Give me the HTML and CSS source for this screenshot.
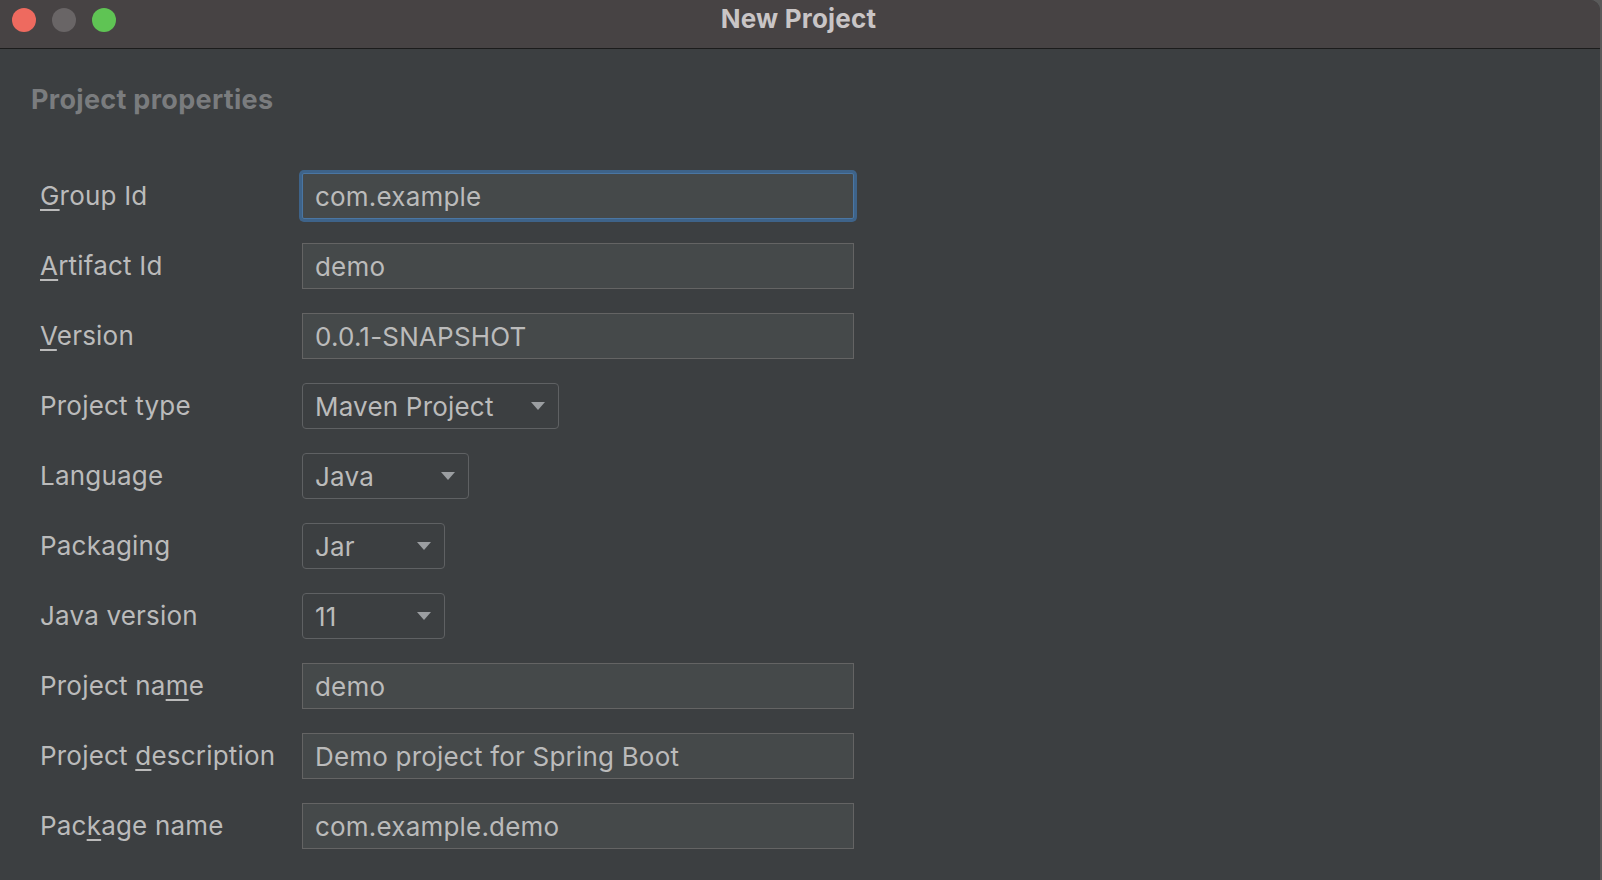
FILE: index.html
```html
<!DOCTYPE html>
<html lang="en">
<head>
<meta charset="utf-8">
<title>New Project</title>
<link rel="stylesheet" href="styles.css">
</head>
<body>
<div class="window">
  <header class="titlebar">
    <div class="lights">
      <span class="light red"></span>
      <span class="light gray"></span>
      <span class="light green"></span>
    </div>
    <div class="title">New Project</div>
    <div class="spacer"></div>
  </header>
  <main class="content">
    <h1 class="heading">Project properties</h1>
    <div class="form">
      <label class="label"><span class="mn">G</span>roup Id</label>
      <div class="field focused">com.example</div>

      <label class="label"><span class="mn">A</span>rtifact Id</label>
      <div class="field">demo</div>

      <label class="label"><span class="mn">V</span>ersion</label>
      <div class="field">0.0.1-SNAPSHOT</div>

      <label class="label">Project type</label>
      <div class="select w-maven"><span>Maven Project</span><svg class="arrow" width="14" height="8" viewBox="0 0 14 8"><polygon points="0,0 14,0 7,8"/></svg></div>

      <label class="label">Language</label>
      <div class="select w-java"><span>Java</span><svg class="arrow" width="14" height="8" viewBox="0 0 14 8"><polygon points="0,0 14,0 7,8"/></svg></div>

      <label class="label">Packaging</label>
      <div class="select w-jar"><span>Jar</span><svg class="arrow" width="14" height="8" viewBox="0 0 14 8"><polygon points="0,0 14,0 7,8"/></svg></div>

      <label class="label">Java version</label>
      <div class="select w-jar"><span>11</span><svg class="arrow" width="14" height="8" viewBox="0 0 14 8"><polygon points="0,0 14,0 7,8"/></svg></div>

      <label class="label">Project na<span class="mn">m</span>e</label>
      <div class="field">demo</div>

      <label class="label">Project <span class="mn">d</span>escription</label>
      <div class="field">Demo project for Spring Boot</div>

      <label class="label">Pac<span class="mn">k</span>age name</label>
      <div class="field">com.example.demo</div>
    </div>
  </main>
</div>
</body>
</html>
```

FILE: styles.css
```css
* { box-sizing: border-box; }

html, body {
  margin: 0;
  padding: 0;
  height: 100%;
}

body {
  background: #5a5a5a;
  font-family: Inter, "Noto Sans", "Liberation Sans", sans-serif;
  color: #bbbbbb;
  overflow: hidden;
}

.window {
  width: 1600px;
  height: 880px;
  background: #3c3f41;
  border-top-right-radius: 10px;
  display: flex;
  flex-direction: column;
}

.titlebar {
  height: 49px;
  flex: 0 0 49px;
  background: #474344;
  border-bottom: 1px solid #1c1c1c;
  border-top-right-radius: 10px;
  display: grid;
  grid-template-columns: 1fr auto 1fr;
  align-items: start;
  padding-top: 7px;
}

.lights {
  display: flex;
  gap: 16px;
  padding-left: 12px;
  padding-top: 1px;
}

.light {
  width: 24px;
  height: 24px;
  border-radius: 50%;
  display: block;
}
.light.red { background: #ee6a5f; }
.light.gray { background: #696566; }
.light.green { background: #5fc454; }

.title {
  font-size: 26px;
  font-weight: 700;
  color: #c9c5c6;
  line-height: 24px;
  letter-spacing: 0.2px;
  margin-left: -3px;
}

.content {
  flex: 1;
  padding: 36px 0 0 0;
}

.heading {
  margin: 0 0 58px 31px;
  font-size: 27px;
  line-height: 30px;
  font-weight: 700;
  letter-spacing: 0.3px;
  color: #7a7c7e;
}

.form {
  display: grid;
  grid-template-columns: 262px auto;
  grid-auto-rows: 46px;
  row-gap: 24px;
  padding-left: 40px;
  align-items: center;
  justify-items: start;
}

.label {
  font-size: 26px;
  line-height: 30px;
  letter-spacing: 0.2px;
  color: #bbbbbb;
}

.mn {
  text-decoration: underline;
  text-decoration-thickness: 2px;
  text-underline-offset: 4px;
}

.field {
  width: 552px;
  height: 46px;
  background: #45494a;
  border: 1px solid #646464;
  padding: 0 12px;
  display: flex;
  align-items: center;
  font-size: 26px;
  letter-spacing: 0.2px;
  color: #bbbbbb;
}

.field.focused {
  border-color: #4a76a3;
  box-shadow: 0 0 0 3px #3e6389;
  border-radius: 2px;
}

.select {
  height: 46px;
  border: 1px solid #5f6163;
  border-radius: 4px;
  background: #3c3f41;
  display: flex;
  align-items: center;
  justify-content: space-between;
  padding: 0 13px 0 12px;
  font-size: 26px;
  letter-spacing: 0.2px;
  color: #bbbbbb;
}

.w-maven { width: 257px; }
.w-java { width: 167px; }
.w-jar { width: 143px; }

.arrow { display: block; }
.arrow polygon { fill: #9b9ea1; }
```
